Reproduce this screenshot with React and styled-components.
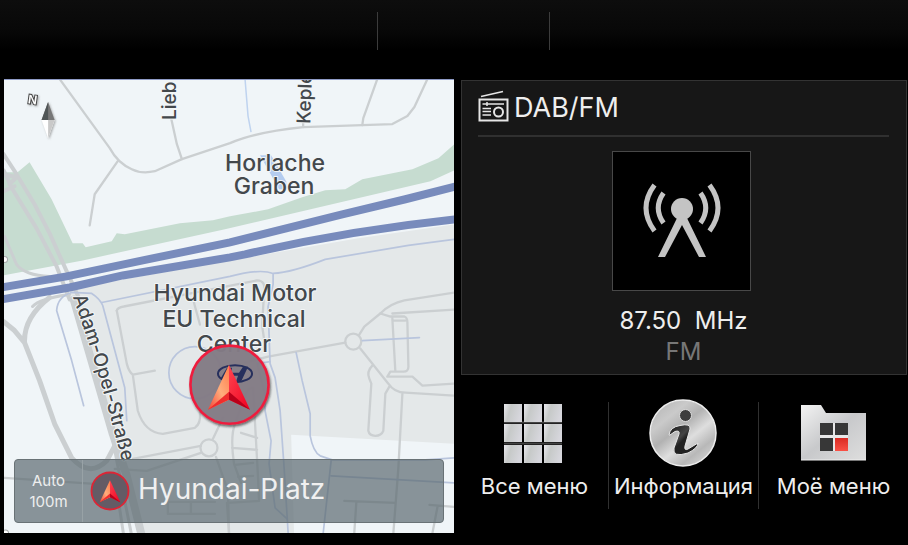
import React from "react";
import styled, { createGlobalStyle } from "styled-components";

const GlobalStyle = createGlobalStyle`
  * { box-sizing: border-box; }
  body {
    margin: 0;
    background: #000;
    font-family: Inter, "Noto Sans", sans-serif;
    color: #eee;
  }
`;

const Screen = styled.div`
  display: flex;
  flex-direction: column;
  min-height: 100vh;
  background: #000;
`;

const StatusBar = styled.header`
  display: grid;
  grid-template-columns: 377fr 172fr 357fr;
  height: 50px;
  margin-bottom: 29px;
  padding-top: 12px;
  background: linear-gradient(#0d0d0d, #080808 60%, #000);
`;

const StatusSlot = styled.div`
  border-right: ${(p) => (p.$last ? "0" : "1px solid #3c3c3c")};
`;

const Main = styled.main`
  display: grid;
  grid-template-columns: 450fr 447fr;
  gap: 7px;
  flex: 1;
  padding: 0 0 13px 4px;
`;

const MapPanel = styled.section`
  position: relative;
  min-height: 453px;
  overflow: hidden;
  border-top: 1px solid #8f9bc6;
  background: #f0f5f8;
`;

const MapCanvas = styled.svg`
  position: absolute;
  inset: 0;
  width: 100%;
  height: 100%;
`;

const MapLabel = styled.text`
  font-family: Inter, "Noto Sans", sans-serif;
  font-size: ${(p) => p.$size || 23}px;
  font-weight: 500;
  fill: #43484c;
  stroke: #f3f6f7;
  stroke-width: 2px;
  paint-order: stroke;
  stroke-linejoin: round;
  text-anchor: ${(p) => p.$anchor || "middle"};
`;

const LocationBar = styled.div`
  position: absolute;
  left: 10px;
  right: 10px;
  bottom: 10px;
  height: 64px;
  display: flex;
  align-items: stretch;
  border: 1px solid #697276;
  border-radius: 4px;
  background: rgba(91, 106, 113, 0.7);
`;

const Button = styled.button`
  padding: 0;
  border: 0;
  background: none;
  font-family: inherit;
  color: inherit;
  cursor: pointer;
`;

const ScaleButton = styled(Button)`
  width: 68px;
  border-right: 1px solid #98a2a6;
  font-size: 15px;
  line-height: 21px;
  text-align: center;
`;

const ScaleLine = styled.span`
  display: block;
`;

const CurrentStreet = styled.div`
  display: flex;
  align-items: center;
  gap: 8px;
  padding: 0 7px;
  font-size: 28px;
  line-height: 32px;
  white-space: nowrap;
  color: #f0f0f0;
`;

const StreetName = styled.span`
  padding-bottom: 4px;
`;

const Side = styled.div`
  display: flex;
  flex-direction: column;
  min-width: 0;
`;

const RadioPanel = styled.section`
  flex: 1;
  display: flex;
  flex-direction: column;
  align-items: center;
  margin: 1px 1px 0 0;
  padding: 0 17px 7px 16px;
  border: 1px solid #333;
  background: #171717;
`;

const RadioHeader = styled.header`
  align-self: stretch;
  display: flex;
  align-items: center;
  gap: 5px;
  height: 56px;
  margin-bottom: 14px;
  border-bottom: 2px solid #303030;
`;

const RadioTitle = styled.h1`
  margin: 0;
  font-size: 27px;
  line-height: 32px;
  font-weight: 400;
`;

const Artwork = styled.div`
  display: grid;
  place-items: center;
  width: 139px;
  height: 140px;
  margin-right: 4px;
  border: 1px solid #484848;
  background: #000;
`;

const Frequency = styled.p`
  margin: 14px 0 0;
  font-size: 24px;
  line-height: 32px;
  white-space: pre;
`;

const Band = styled.p`
  margin: 0;
  font-size: 24px;
  line-height: 30px;
  color: #777;
`;

const Menu = styled.nav`
  display: grid;
  grid-template-columns: 148fr 150fr 149fr;
  height: 107px;
  margin: 27px 0 24px;
`;

const MenuButton = styled(Button)`
  display: flex;
  flex-direction: column;
  align-items: center;
  justify-content: space-between;
  min-width: 0;
  padding-bottom: 9px;
  border-right: ${(p) => (p.$last ? "0" : "1px solid #303030")};
  font-size: 22px;
  line-height: 28px;
  white-space: nowrap;
`;

const MenuIcon = styled.svg`
  display: block;
  margin-top: -5px;
  overflow: visible;
`;

const ArrowShape = () => (
  <>
    <path d="M0-20V15L-21 25Z" fill="url(#arrowLeft)" />
    <path d="M0-20V15L21 25Z" fill="url(#arrowRight)" />
    <path d="M0 7 21 25 0 15Z" fill="#b9001a" />
    <path d="M0 7-21 25 0 15Z" fill="#ef2d2d" />
  </>
);

const ArrowGradients = () => (
  <defs>
    <linearGradient id="arrowLeft" x1="1" y1="0" x2="0" y2="1">
      <stop stopColor="#ff7b4b" />
      <stop offset=".5" stopColor="#ffad7c" />
      <stop offset="1" stopColor="#f44335" />
    </linearGradient>
    <linearGradient id="arrowRight" x1="0" y1="0" x2="1" y2="1">
      <stop stopColor="#ff4550" />
      <stop offset="1" stopColor="#f00021" />
    </linearGradient>
  </defs>
);

const grayRoads = [
  "M60 79 110 148Q118 163 132 169 142 174 155 171L182 159 230 143Q255 132 303 127L362 125 392 124 407 116 414 107 427 79",
  "M362 125 363 118 377 79",
  "M118 161 95 194 90 225",
  "M171 117 177 144 182 159",
  "M303 120V127",
  "M117 310Q118 307 124 306L257 280Q266 280 264 292L262 325 265 345",
  "M117 310 127 363Q129 371 133 374L155 370M133 374 138 410Q145 432 163 433L195 427Q201 423 200 412",
  "M201 445 133 458M201 452 147 470 115 468M213 438 223 417M216 456 228 490 229 532",
  "M194 302 200 324",
  "M245 362 268 356 345 342M359 334 364 326 380 313Q390 303 404 300L454 292",
  "M380 313 390 316H404Q407 317 407 322L408 366Q408 371 403 371H390L387 376H412L422 385 454 383M392 313 454 309M392 318 395 371M392 320H405",
  "M360 348 388 383Q394 392 405 392L454 395",
  "M372 365Q366 371 369 378L371 383 368 430Q369 435 375 435T383 430L385 393 389 386",
  "M402 393 398 467 393 532M344 500 395 502M356 502 354 532M429 504 454 506M437 506 432 532",
  "M253 387Q247 387 244 398L235 423Q230 436 234 463L241 482M253 387 255 423 258 477 259 500M241 432 257 437M232 447 257 449M235 464 253 462M238 476 253 475M227 502 259 500M227 502 229 532",
  "M5 477 110 484M167 501H215M168 501V513H215M191 502V513",
];

const blueRoads = [
  "M84 405 72 360 57 310Q58 296 72 292L92 293Q100 298 103 305L125 387 127 420",
  "M102 302 230 276Q260 268 273 273 292 272 325 259L408 245 454 239M273 273V284L268 306 270 363 275 377 280 410 284 467 288 532",
  "M296 352 302 380 310 413V435Q313 451 320 455L332 459H425L454 457M331 459 323 532M331 475 454 482",
  "M362 340 419 337M257 363 270 361M257 363 265 395V410L271 440 269 463 275 507 287 518",
];

const CityMap = () => (
  <MapCanvas viewBox="4 80 450 452" preserveAspectRatio="xMidYMid slice" role="img" aria-label="Map">
    <ArrowGradients />
    <defs>
      <path id="opelStreet" d="M73 296Q82 322 90 346 105 393 126 475" />
      <filter id="compassShade" x="-50%" y="-50%" width="200%" height="200%">
        <feDropShadow dx="1" dy="1" stdDeviation="1" floodColor="#777" floodOpacity=".6" />
      </filter>
      <filter id="markerShade" x="-20%" y="-20%" width="140%" height="140%">
        <feDropShadow dx="1" dy="2" stdDeviation="1" floodColor="#222" floodOpacity=".6" />
      </filter>
    </defs>
    <path d="M70 290 123 279 230 260 358 238 454 224V443L291 434 294 535H140L113 433Z" fill="#e4e8e9" />
    <path d="M4 172H18L30 162 52 199 73 243H83L86 247 112 241 117 233 125 234 180 223 213 220 230 216 268 209 302 197 325 190 345 189 362 179 412 169 438 158 454 144V170L430 181 225 229 83 260 4 275Z" fill="#c6dcd0" />
    <path d="M260 155H271L286 181 287 189H279Z" fill="#b4ccef" />
    <path d="M245 79 248 116 251 132" stroke="#bfd3ef" strokeWidth="1.5" fill="none" />
    <g fill="none" stroke="#cbcfd1" strokeWidth="2.3" strokeLinecap="round" strokeLinejoin="round">
      {grayRoads.map((d) => <path key={d} d={d} />)}
      <circle cx="209" cy="447" r="8.5" />
      <circle cx="353" cy="341" r="8" />
      <path d="M5 236 17 264Q25 275 50 276M33 306Q40 298 70 294" strokeWidth="3" />
      <path d="M4 321 15 330 25 342 40 380 55 423 72 457Q90 477 107 460L115 445M25 342Q24 317 50 297" strokeWidth="5" />
      <path d="M4 154 17 174 35 204 50 233 68 273 80 299M4 170 13 189 37 228 57 266 70 299M4 174 17 177M4 191 15 186M10 184 17 177" strokeWidth="4" />
      <path d="M74 299 113 433 127 475 142 535" strokeWidth="8" />
      <path d="M112 433 117 460 132 535M115 475 124 535" strokeWidth="3" />
    </g>
    <g fill="none" stroke="#b9c5dd" strokeWidth="1.7" strokeLinecap="round" strokeLinejoin="round">
      {blueRoads.map((d) => <path key={d} d={d} />)}
      <circle cx="195" cy="372" r="26" />
    </g>
    <g fill="none" stroke="#788bbc" strokeWidth="8">
      <path d="M2 287 67 276 143 260 230 242 342 214 405 199 456 186" />
      <path d="M2 299 70 287 123 275 230 257 245 254Q350 230 456 219" />
    </g>
    <g fill="#fff" stroke="#a6a9aa"><circle cx="5" cy="259" r="3" /><circle cx="6" cy="532" r="3" /></g>

    <MapLabel $size={19} $anchor="start" transform="translate(176 120) rotate(-90)">Lieb</MapLabel>
    <MapLabel $size={19} $anchor="start" transform="translate(310 124) rotate(-88)">Kepler</MapLabel>
    <MapLabel x="275" y="171">Horlache</MapLabel>
    <MapLabel x="274" y="194">Graben</MapLabel>
    <MapLabel x="235" y="301">Hyundai Motor</MapLabel>
    <MapLabel x="234" y="326">EU Technical</MapLabel>
    <MapLabel x="234" y="351">Center</MapLabel>
    <MapLabel $size={19} $anchor="start"><textPath href="#opelStreet">Adam-Opel-Straße</textPath></MapLabel>

    <g filter="url(#compassShade)">
      <path d="M48.5 102 55 120H42Z" fill="#777" />
      <path d="M48.5 102V120H42Z" fill="#505456" />
      <path d="M42 120H55L48.5 138Z" fill="#fff" />
      <path d="M48.5 120H55L48.5 138Z" fill="#c9c9c9" />
      <text x="33" y="104" fontSize="12" fontWeight="600" textAnchor="middle" fill="#fff" stroke="#444" strokeWidth="2" paintOrder="stroke" transform="rotate(8 33 100)">N</text>
    </g>

    <g filter="url(#markerShade)">
      <circle cx="229.5" cy="384" r="39" fill="#857d88" fillOpacity=".93" stroke="#ee1c3e" strokeWidth="2.6" />
    </g>
    <ellipse cx="235" cy="373" rx="17" ry="8.5" fill="none" stroke="#27305d" strokeWidth="2" />
    <path d="M227 367H232L231 372H239L243 366H248L241 381H236L238 375H229L226 381 221 377Z" fill="#27305d" />
    <g transform="translate(229 384)"><ArrowShape /></g>
  </MapCanvas>
);

const PositionIcon = () => (
  <svg width="40" height="40" viewBox="-20 -20 40 40" aria-hidden="true">
    <circle r="18.5" fill="#645b65" stroke="#dc2535" strokeWidth="1.8" />
    <g transform="translate(0 -1) scale(.49)"><ArrowShape /></g>
  </svg>
);

const RadioIcon = () => (
  <svg width="31" height="36" viewBox="0 0 31 36" fill="none" stroke="#e6e6e6" aria-hidden="true">
    <path d="M3 6.5 25 1.5" strokeWidth="1.5" />
    <rect x="1.5" y="9.5" width="28" height="21" strokeWidth="2" />
    <path d="M4.5 14H26M4.5 18.5H13M4.5 21.5H13M4.5 25H13" strokeWidth="1.3" />
    <path d="M9 12V16" strokeWidth="1.5" />
    <circle cx="20.5" cy="22" r="4.5" strokeWidth="2" />
  </svg>
);

const AntennaIcon = () => (
  <svg width="78" height="78" viewBox="0 0 78 78" fill="none" stroke="#c4c4c4" aria-hidden="true">
    <g strokeWidth="5">
      <path d="M11.5 3Q-5.5 26 11.5 49M20.5 11Q10 26 20.5 41M57.5 11Q68 26 57.5 41M66.5 3Q83.5 26 66.5 49" />
    </g>
    <circle cx="39" cy="27" r="11" fill="#c4c4c4" stroke="none" />
    <path d="M35 34 15 75H22L39 43 56 75H63L43 34Z" fill="#c4c4c4" stroke="none" />
  </svg>
);

const tileColumns = [1, 21, 41];
const tileRows = [7, 27, 48];

const GridIcon = () => (
  <MenuIcon width="64" height="68" viewBox="0 0 64 68" aria-hidden="true">
    <defs>
      <linearGradient id="tile" x1="0" y1="0" x2="1" y2=".3">
        <stop stopColor="#e9e9ee" /><stop offset=".4" stopColor="#c6c9c8" /><stop offset="1" stopColor="#d6d6dc" />
      </linearGradient>
    </defs>
    <path d="M1 25.5H59M1 46.5H59" stroke="#444" strokeWidth="2" />
    {tileRows.map((y) => tileColumns.map((x) => (
      <rect key={`${x}-${y}`} x={x} y={y} width="18" height="18" fill="url(#tile)" />
    )))}
  </MenuIcon>
);

const InfoIcon = () => (
  <MenuIcon width="72" height="72" viewBox="0 0 72 72" aria-hidden="true">
    <defs>
      <linearGradient id="disc" x1=".1" y1="0" x2=".9" y2="1">
        <stop stopColor="#b5b5b5" /><stop offset=".25" stopColor="#cacaca" /><stop offset=".42" stopColor="#b2b2b2" />
        <stop offset=".6" stopColor="#dedede" /><stop offset=".78" stopColor="#b8b8b8" /><stop offset="1" stopColor="#ddd" />
      </linearGradient>
      <linearGradient id="ink" x1="0" y1="0" x2="1" y2="1"><stop stopColor="#181818" /><stop offset=".4" stopColor="#444" /><stop offset=".5" stopColor="#222" /></linearGradient>
    </defs>
    <circle cx="35" cy="36" r="33" fill="url(#disc)" stroke="#ededed" strokeWidth="1.5" />
    <circle cx="37.5" cy="18.5" r="6" fill="#3d3d3d" stroke="#ddd" />
    <path d="M21 38Q22 30 32 28.5 43 26 42 32L37 49Q36 54 40 52L50 46Q50 51 40 56 24 61 26 51L31 37Q32 33 27 34.5L22 38Z" fill="url(#ink)" stroke="#e6e6e6" />
  </MenuIcon>
);

const FolderIcon = () => (
  <MenuIcon width="66" height="68" viewBox="0 0 66 68" aria-hidden="true">
    <defs>
      <linearGradient id="folder" x1="0" y1="0" x2="1" y2="1"><stop stopColor="#f3f3f3" /><stop offset=".5" stopColor="#c8c9cb" /><stop offset="1" stopColor="#dedede" /></linearGradient>
      <linearGradient id="folderRed" x1="0" y1="0" x2="0" y2="1"><stop stopColor="#d92b23" /><stop offset="1" stopColor="#fa5146" /></linearGradient>
    </defs>
    <path d="M0 8H20L25 16H65V63H0Z" fill="url(#folder)" />
    <path d="M0 63H65" stroke="#eee" />
    <path d="M19 26H47V54H19Z" fill="#e8e8e8" />
    <path d="M19 26H32V38H19ZM34 26H47V38H34ZM19 41H32V54H19Z" fill="#373737" />
    <path d="M34 41H47V54H34Z" fill="url(#folderRed)" />
  </MenuIcon>
);

export default function App() {
  return (
    <>
      <GlobalStyle />
      <Screen>
        <StatusBar>
          <StatusSlot />
          <StatusSlot />
          <StatusSlot $last />
        </StatusBar>
        <Main>
          <MapPanel>
            <CityMap />
            <LocationBar>
              <ScaleButton type="button">
                <ScaleLine>Auto</ScaleLine>
                <ScaleLine>100m</ScaleLine>
              </ScaleButton>
              <CurrentStreet>
                <PositionIcon />
                <StreetName>Hyundai-Platz</StreetName>
              </CurrentStreet>
            </LocationBar>
          </MapPanel>
          <Side>
            <RadioPanel>
              <RadioHeader>
                <RadioIcon />
                <RadioTitle>DAB/FM</RadioTitle>
              </RadioHeader>
              <Artwork><AntennaIcon /></Artwork>
              <Frequency>{"87.50  MHz"}</Frequency>
              <Band>FM</Band>
            </RadioPanel>
            <Menu>
              <MenuButton type="button"><GridIcon />Все меню</MenuButton>
              <MenuButton type="button"><InfoIcon />Информация</MenuButton>
              <MenuButton type="button" $last><FolderIcon />Моё меню</MenuButton>
            </Menu>
          </Side>
        </Main>
      </Screen>
    </>
  );
}
